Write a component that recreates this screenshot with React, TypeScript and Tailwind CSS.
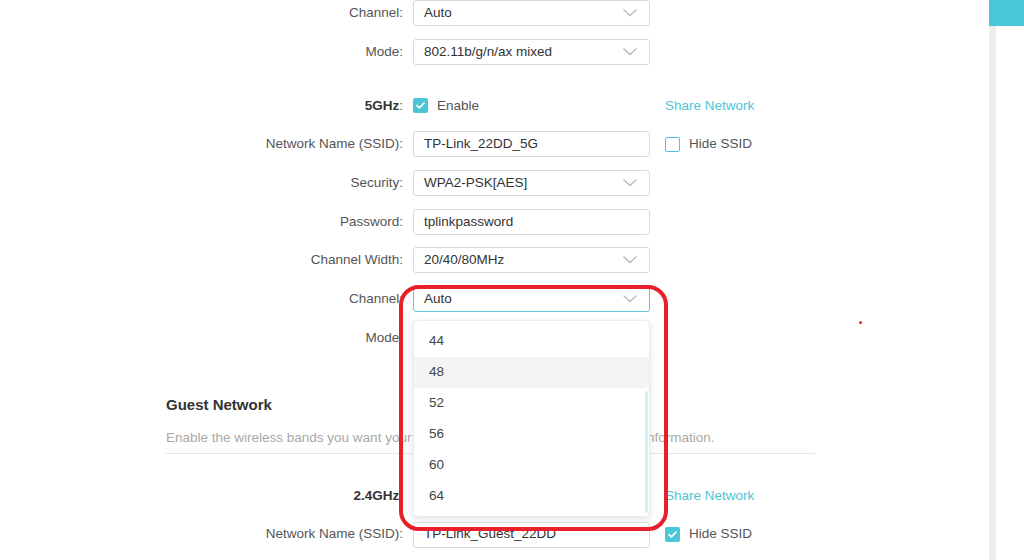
import React from 'react'

function Chevron() {
  return (
    <svg width="14" height="8" viewBox="0 0 14 8" className="shrink-0">
      <path d="M1 1 L7 6.5 L13 1" fill="none" stroke="#bcbcbc" strokeWidth="1.6" strokeLinecap="round" strokeLinejoin="round" />
    </svg>
  )
}

function Checkbox({ checked }: { checked: boolean }) {
  if (!checked) {
    return <span className="inline-block w-[15px] h-[15px] rounded-[2px] border-[1.5px] border-[#4bc6d7] bg-white shrink-0" />
  }
  return (
    <span className="inline-flex items-center justify-center w-[15px] h-[15px] rounded-[2px] bg-[#4bc6d7] shrink-0">
      <svg width="9" height="7" viewBox="0 0 9 7">
        <path d="M1 3.6 L3.4 5.8 L8 1.2" fill="none" stroke="#fff" strokeWidth="1.7" strokeLinecap="round" strokeLinejoin="round" />
      </svg>
    </span>
  )
}

function Field({ value, select, focused }: { value: string; select?: boolean; focused?: boolean }) {
  return (
    <div
      className={`w-[237px] h-[26px] flex items-center justify-between pl-[10px] pr-[12px] rounded-[3px] border bg-white text-[13.5px] text-[#333] ${
        focused ? 'border-[#5fc9d8]' : 'border-[#dadada]'
      }`}
    >
      <span>{value}</span>
      {select && <Chevron />}
    </div>
  )
}

function Row({ label, bold, children, side }: { label: string; bold?: boolean; children: React.ReactNode; side?: React.ReactNode }) {
  return (
    <div className="flex items-center h-[26px]">
      <div className={`w-[237px] whitespace-nowrap text-right text-[13.5px] ${bold ? 'font-bold text-[#333]' : 'text-[#555]'}`}>
        {label}
        <span className="font-normal text-[#555]">:</span>
      </div>
      <div className="ml-[10px] w-[237px] flex items-center">{children}</div>
      {side && <div className="ml-[15px] flex items-center text-[13.5px]">{side}</div>}
    </div>
  )
}

const channels = ['44', '48', '52', '56', '60', '64']

export default function App() {
  return (
    <div className="relative w-[1024px] h-[560px] overflow-hidden bg-white flex" style={{ fontFamily: '"Liberation Sans", Arial, sans-serif' }}>
      {/* main settings column */}
      <div className="w-[989px] h-full pl-[166px]">
        <div className="flex flex-col gap-[12.7px]">
          <Row label="Channel">
            <Field value="Auto" select />
          </Row>
          <Row label="Mode">
            <Field value="802.11b/g/n/ax mixed" select />
          </Row>
        </div>

        <div className="flex flex-col gap-[12.7px] mt-[28px]">
          <Row label="5GHz" bold side={<span className="text-[#4bc6d7]">Share Network</span>}>
            <div className="flex items-center gap-[9px]">
              <Checkbox checked />
              <span className="text-[13.5px] text-[#555]">Enable</span>
            </div>
          </Row>
          <Row
            label="Network Name (SSID)"
            side={
              <div className="flex items-center gap-[9px]">
                <Checkbox checked={false} />
                <span className="text-[#555]">Hide SSID</span>
              </div>
            }
          >
            <Field value="TP-Link_22DD_5G" />
          </Row>
          <Row label="Security">
            <Field value="WPA2-PSK[AES]" select />
          </Row>
          <Row label="Password">
            <Field value="tplinkpassword" />
          </Row>
          <Row label="Channel Width">
            <Field value="20/40/80MHz" select />
          </Row>
          <Row label="Channel">
            <Field value="Auto" select focused />
          </Row>
          <Row label="Mode">
            <Field value="802.11a/n/ac/ax mixed" select />
          </Row>
        </div>

        <div className="mt-[44px] w-[649px]">
          <h2 className="text-[15px] leading-[20px] font-bold text-[#333]">Guest Network</h2>
          <p className="mt-[14px] text-[13.5px] leading-[18px] text-[#a8a8a8] whitespace-nowrap">
            Enable the wireless bands you want your guests to use and share their network information.
          </p>
          <div className="mt-[6px] border-t border-[#e6e6e6]" />
        </div>

        <div className="flex flex-col gap-[12.7px] mt-[29px]">
          <Row label="2.4GHz" bold side={<span className="text-[#4bc6d7]">Share Network</span>}>
            <div className="flex items-center gap-[9px]">
              <Checkbox checked />
              <span className="text-[13.5px] text-[#555]">Enable</span>
            </div>
          </Row>
          <Row
            label="Network Name (SSID)"
            side={
              <div className="flex items-center gap-[9px]">
                <Checkbox checked />
                <span className="text-[#555]">Hide SSID</span>
              </div>
            }
          >
            <Field value="TP-Link_Guest_22DD" />
          </Row>
        </div>
      </div>

      {/* right edge strip */}
      <div className="flex-1 flex flex-col">
        <div className="h-[26px] bg-[#4ac6d9]" />
        <div className="flex-1 flex">
          <div className="w-[7px] bg-[#ededed]" />
          <div className="flex-1 bg-white" />
        </div>
      </div>

      {/* open channel dropdown */}
      <div className="absolute left-[413px] top-[320px] w-[237px] h-[197px] bg-white rounded-[4px] border border-[#ececec] shadow-[0_2px_6px_rgba(0,0,0,0.12)] py-[5px]">
        {channels.map((c) => (
          <div
            key={c}
            className={`h-[31px] flex items-center pl-[15px] text-[13.5px] text-[#444] ${c === '48' ? 'bg-[#f4f4f4]' : ''}`}
          >
            {c}
          </div>
        ))}
        <div className="absolute right-[1px] top-[70px] w-[3px] h-[122px] bg-[#c9f1f6] rounded-full" />
      </div>

      {/* red annotation */}
      <div className="absolute left-[399px] top-[285px] w-[269px] h-[246px] rounded-[20px] border-[4px] border-[#e8202a] pointer-events-none" />
      <div className="absolute left-[859px] top-[321px] w-[3px] h-[3px] rounded-full bg-[#e8202a]" />
    </div>
  )
}
